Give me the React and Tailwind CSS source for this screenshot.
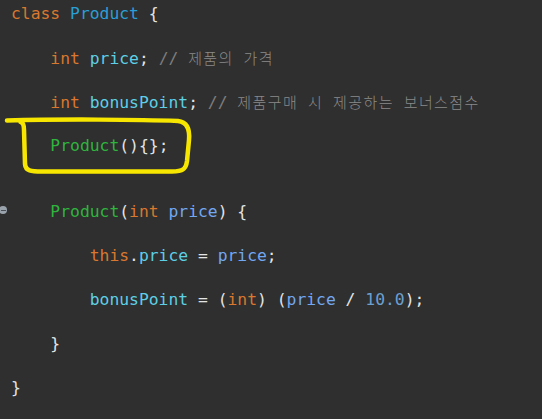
import React from "react";

const K = ({ children }) => <span className="text-[#d9782e]">{children}</span>;
const C = ({ children }) => <span className="text-[#2a9fd6]">{children}</span>;
const F = ({ children }) => <span className="text-[#5dcfe6]">{children}</span>;
const P = ({ children }) => <span className="text-[#72a7f2]">{children}</span>;
const G = ({ children }) => <span className="text-[#2fb43e]">{children}</span>;
const W = ({ children }) => <span className="text-[#e4e4e4]">{children}</span>;
const N = ({ children }) => <span className="text-[#6a9fd0]">{children}</span>;
const Ko = ({ children }) => (
  <span className="text-[15px] tracking-[1.4px] font-light [font-family:'Noto_Sans_CJK_KR',sans-serif] text-[#8a8a8a]">{children}</span>
);
const Cm = ({ words }) => (
  <span className="text-[#7d7d7d]">
    {"// "}
    {words.map((w, i) => (
      <React.Fragment key={i}>
        {i > 0 ? " " : ""}
        <Ko>{w}</Ko>
      </React.Fragment>
    ))}
  </span>
);

const Line = ({ children }) => <div className="h-[22px] leading-[22px] whitespace-pre">{children}</div>;

export default function App() {
  return (
    <div className="relative w-[542px] h-[419px] overflow-hidden bg-[#2f2f2f] [font-family:'DejaVu_Sans_Mono',monospace] text-[16.35px]">
      <div className="pl-[11px] mt-[-19px]">
        <Line>
          <K>package</K> <W>product;</W>
        </Line>
        <Line>
          <K>class</K> <C>Product</C> <W>{"{"}</W>
        </Line>
        <Line> </Line>
        <Line>
          {"    "}
          <K>int</K> <F>price</F>
          <W>;</W> <Cm words={["제품의", "가격"]} />
        </Line>
        <Line> </Line>
        <Line>
          {"    "}
          <K>int</K> <F>bonusPoint</F>
          <W>;</W> <Cm words={["제품구매", "시", "제공하는", "보너스점수"]} />
        </Line>
        <Line> </Line>
        <Line>
          {"    "}
          <G>Product</G>
          <W>(){"{}"};</W>
        </Line>
        <Line> </Line>
        <Line> </Line>
        <Line>
          {"    "}
          <G>Product</G>
          <W>(</W>
          <K>int</K> <P>price</P>
          <W>) {"{"}</W>
        </Line>
        <Line> </Line>
        <Line>
          {"        "}
          <K>this</K>
          <W>.</W>
          <F>price</F> <W>=</W> <P>price</P>
          <W>;</W>
        </Line>
        <Line> </Line>
        <Line>
          {"        "}
          <F>bonusPoint</F> <W>= (</W>
          <K>int</K>
          <W>) (</W>
          <P>price</P> <W>/</W> <N>10.0</N>
          <W>);</W>
        </Line>
        <Line> </Line>
        <Line>
          {"    "}
          <W>{"}"}</W>
        </Line>
        <Line> </Line>
        <Line>
          <W>{"}"}</W>
        </Line>
      </div>

      <div className="absolute left-[-1px] top-[206px] w-[8px] h-[8px] rounded-full bg-[#9aa2ac] flex items-center justify-center">
        <div className="w-[5px] h-[1px] bg-[#4a4f55]" />
      </div>

      <svg className="absolute left-0 top-0 pointer-events-none" width="542" height="419" viewBox="0 0 542 419">
        <path
          d="M7,120.5 C60,119 140,119.5 178,121 C187,122 190,129 189,140 L187,161 C186,169 183,171.5 172,171.5 L42,171.5 C31,171.5 25.5,171 25,164 L24,130 C24,125 23,122.5 20.5,122"
          fill="none"
          stroke="#f7e600"
          strokeWidth="4.5"
          strokeLinecap="round"
          strokeLinejoin="round"
        />
      </svg>
    </div>
  );
}
